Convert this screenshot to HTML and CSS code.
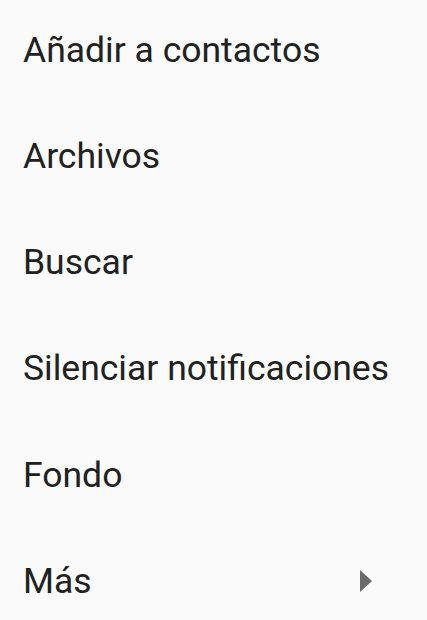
FILE: index.html
```html
<!DOCTYPE html>
<html lang="es">
<head>
<meta charset="utf-8">
<link rel="stylesheet" href="styles.css">
</head>
<body>
<ul class="menu">
  <li class="item">Añadir a contactos</li>
  <li class="item">Archivos</li>
  <li class="item">Buscar</li>
  <li class="item">Silenciar notificaciones</li>
  <li class="item">Fondo</li>
  <li class="item item-sub">Más<span class="arrow"></span></li>
</ul>
</body>
</html>
```
FILE: styles.css
```css
html, body {
  margin: 0;
  padding: 0;
  background: #fafafa;
}
body {
  width: 427px;
  height: 620px;
  overflow: hidden;
}
.menu {
  list-style: none;
  margin: -3.2px 0 0 0;
  padding: 0;
  display: flex;
  flex-direction: column;
}
.item {
  flex-shrink: 0;
  height: 106.2px;
  line-height: 106.2px;
  padding-left: 23px;
  font-family: Roboto, "Noto Sans", sans-serif;
  font-size: 35.5px;
  color: #212121;
  white-space: nowrap;
  display: flex;
  align-items: center;
  justify-content: space-between;
}
.item-sub {
  padding-right: 55px;
}
.arrow {
  width: 0;
  height: 0;
  border-top: 11.5px solid transparent;
  border-bottom: 11.5px solid transparent;
  border-left: 12px solid #6b6b6b;
}
```
